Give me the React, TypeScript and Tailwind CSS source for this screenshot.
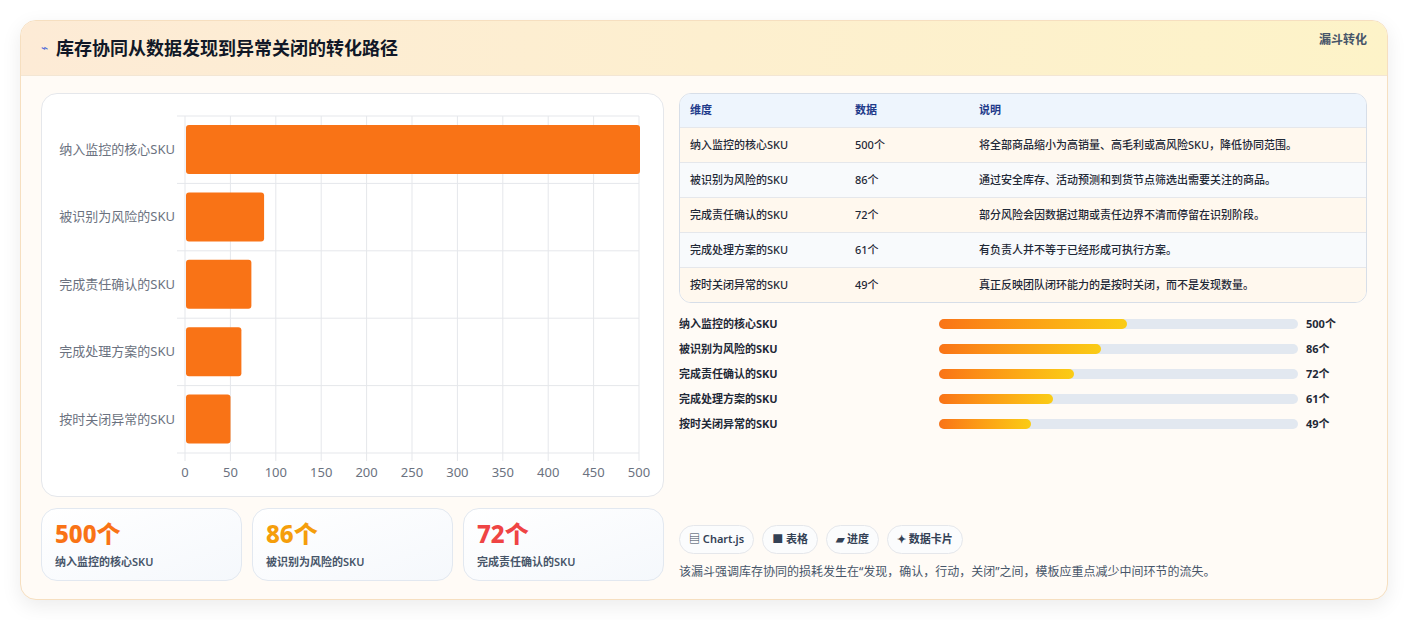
const rows = [
  { name: '纳入监控的核心SKU', v: 500, desc: '将全部商品缩小为高销量、高毛利或高风险SKU，降低协同范围。', p: 52.5 },
  { name: '被识别为风险的SKU', v: 86, desc: '通过安全库存、活动预测和到货节点筛选出需要关注的商品。', p: 45 },
  { name: '完成责任确认的SKU', v: 72, desc: '部分风险会因数据过期或责任边界不清而停留在识别阶段。', p: 37.6 },
  { name: '完成处理方案的SKU', v: 61, desc: '有负责人并不等于已经形成可执行方案。', p: 31.8 },
  { name: '按时关闭异常的SKU', v: 49, desc: '真正反映团队闭环能力的是按时关闭，而不是发现数量。', p: 25.6 },
];

const font = { fontFamily: '"Noto Sans", "Noto Sans CJK SC", sans-serif' };

function Chart() {
  const x0 = 143, x1 = 597, top = 22, band = 67.4;
  const sx = (v: number) => x0 + (v / 500) * (x1 - x0);
  return (
    <svg width="622" height="402" className="block">
      {[0, 50, 100, 150, 200, 250, 300, 350, 400, 450, 500].map((t) => (
        <g key={t}>
          <line x1={sx(t)} x2={sx(t)} y1={top} y2={top + band * 5 + 8} stroke="#e5e7eb" />
          <text x={sx(t)} y={383} textAnchor="middle" fontSize="13" fill="#6b7280">{t}</text>
        </g>
      ))}
      {[0, 1, 2, 3, 4, 5].map((i) => (
        <line key={i} x1={x0 - 8} x2={x1} y1={top + i * band} y2={top + i * band} stroke="#e5e7eb" />
      ))}
      {rows.map((r, i) => (
        <g key={r.name}>
          <rect x={x0 + 1} y={top + i * band + 9} width={sx(r.v) - x0} height={49} rx="3" fill="#f97316" />
          <text x={x0 - 10} y={top + i * band + 38} textAnchor="end" fontSize="13" fill="#6b7280">{r.name}</text>
        </g>
      ))}
    </svg>
  );
}

export default function App() {
  return (
    <div className="min-h-screen bg-white p-5" style={font}>
      <div className="rounded-2xl border border-[#f6dfc0] bg-[#fffbf6] shadow-[0_6px_20px_rgba(0,0,0,0.08)] overflow-hidden">
        <div className="flex items-center justify-between px-5 h-[55px] bg-gradient-to-r from-[#fdebd6] to-[#fdf3c8] border-b border-[#f3e6d4]">
          <div className="flex items-center gap-2">
            <span className="text-[#4f6bd8] text-xs">⌁</span>
            <h1 className="text-lg font-bold text-[#111827]">库存协同从数据发现到异常关闭的转化路径</h1>
          </div>
          <span className="text-xs font-bold text-[#475569] -mt-4">漏斗转化</span>
        </div>
        <div className="flex gap-[15px] px-5 pt-[17px] pb-[18px]">
          <div className="w-[623px] flex flex-col gap-[11px]">
            <div className="h-[404px] rounded-2xl border border-[#e5e7eb] bg-white">
              <Chart />
            </div>
            <div className="grid grid-cols-3 gap-[10px]">
              {[['500个', '#f97316', rows[0].name], ['86个', '#f59e0b', rows[1].name], ['72个', '#ef4444', rows[2].name]].map(([v, c, n]) => (
                <div key={n} className="h-[73px] rounded-2xl border border-[#e2e8f0] bg-gradient-to-br from-white to-[#f5f8fc] px-[13px] pt-[9px]">
                  <div className="text-2xl font-extrabold leading-8" style={{ color: c }}>{v}</div>
                  <div className="text-[11px] font-semibold text-[#475569] mt-1">{n}</div>
                </div>
              ))}
            </div>
          </div>
          <div className="flex-1 flex flex-col">
            <div className="rounded-xl border border-[#d7dee8] overflow-hidden bg-white">
              <div className="grid grid-cols-[165px_124px_1fr] h-[33px] items-center px-[10px] bg-[#eef5fd] text-[11px] font-bold text-[#1e3a8a]">
                <span>维度</span><span>数据</span><span>说明</span>
              </div>
              {rows.map((r, i) => (
                <div key={r.name} className={`grid grid-cols-[165px_124px_1fr] h-[35px] items-center px-[10px] text-[11px] font-medium text-[#1f2937] border-t border-[#e5e7eb] ${i % 2 ? 'bg-[#f8fafc]' : 'bg-[#fff8ee]'}`}>
                  <span>{r.name}</span><span>{r.v}个</span><span>{r.desc}</span>
                </div>
              ))}
            </div>
            <div className="flex flex-col gap-[9px] mt-[13px]">
              {rows.map((r) => (
                <div key={r.name} className="flex items-center h-[16px] text-[11px] font-bold text-[#1f2937]">
                  <span className="w-[260px]">{r.name}</span>
                  <div className="w-[359px] h-[10px] rounded-full bg-[#e2e8f0]">
                    <div className="h-full rounded-full bg-gradient-to-r from-[#f97316] to-[#facc15]" style={{ width: `${r.p}%` }} />
                  </div>
                  <span className="ml-2">{r.v}个</span>
                </div>
              ))}
            </div>
            <div className="mt-auto flex gap-2">
              {['▤ Chart.js', '■ 表格', '▰ 进度', '✦ 数据卡片'].map((t) => (
                <span key={t} className="h-[29px] px-[9px] flex items-center rounded-full border border-[#e5e7eb] bg-[#fbfcfd] text-[11px] font-semibold text-[#334155]">{t}</span>
              ))}
            </div>
            <p className="mt-[9px] text-[12px] text-[#475569]">该漏斗强调库存协同的损耗发生在“发现，确认，行动，关闭”之间，模板应重点减少中间环节的流失。</p>
          </div>
        </div>
      </div>
    </div>
  );
}
